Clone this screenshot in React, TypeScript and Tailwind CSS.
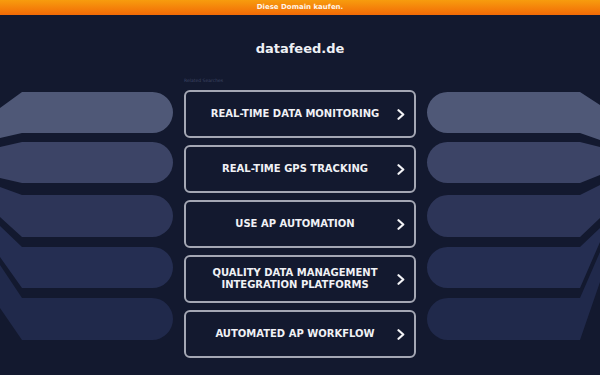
import React from "react";

type Row = { t: number; b: number; tl: number; bl: number; c: string };

const leftRows: Row[] = [
  { t: 2, b: 43, tl: 18, bl: 48, c: "#4f5877" },
  { t: 52, b: 93, tl: 57, bl: 88, c: "#3c4466" },
  { t: 105, b: 147, tl: 97, bl: 127, c: "#2d3558" },
  { t: 157, b: 198, tl: 136, bl: 167, c: "#252e52" },
  { t: 208, b: 250, tl: 175, bl: 218, c: "#20294b" },
];

const rightRows: Row[] = [
  { t: 2, b: 43, tl: 15, bl: 50, c: "#4f5877" },
  { t: 52, b: 93, tl: 57, bl: 85, c: "#3c4466" },
  { t: 105, b: 147, tl: 95, bl: 128, c: "#2d3558" },
  { t: 157, b: 198, tl: 138, bl: 152, c: "#252e52" },
  { t: 208, b: 250, tl: 162, bl: 192, c: "#20294b" },
];

function LeftDeco() {
  return (
    <svg width="184" height="270" viewBox="0 0 184 270" className="shrink-0">
      {leftRows.map((r, i) => {
        const rad = (r.b - r.t) / 2;
        return (
          <path
            key={i}
            d={`M22,${r.t} L${173 - rad},${r.t} A${rad},${rad} 0 0 1 ${173 - rad},${r.b} L22,${r.b} L0,${r.bl} L0,${r.tl} Z`}
            fill={r.c}
          />
        );
      })}
    </svg>
  );
}

function RightDeco() {
  return (
    <svg width="184" height="270" viewBox="0 0 184 270" className="shrink-0">
      {rightRows.map((r, i) => {
        const rad = (r.b - r.t) / 2;
        return (
          <path
            key={i}
            d={`M164,${r.t} L${11 + rad},${r.t} A${rad},${rad} 0 0 0 ${11 + rad},${r.b} L164,${r.b} L184,${r.bl} L184,${r.tl} Z`}
            fill={r.c}
          />
        );
      })}
    </svg>
  );
}

const items: string[][] = [
  ["REAL-TIME DATA MONITORING"],
  ["REAL-TIME GPS TRACKING"],
  ["USE AP AUTOMATION"],
  ["QUALITY DATA MANAGEMENT", "INTEGRATION PLATFORMS"],
  ["AUTOMATED AP WORKFLOW"],
];

function Chevron() {
  return (
    <svg width="8" height="11" viewBox="0 0 8 11" className="shrink-0">
      <polyline
        points="1.5,1.2 6.3,5.5 1.5,9.8"
        fill="none"
        stroke="#f2f2f5"
        strokeWidth="2.2"
        strokeLinecap="round"
        strokeLinejoin="round"
      />
    </svg>
  );
}

export default function App() {
  return (
    <div className="w-[600px] h-[375px] overflow-hidden bg-[#13192f] font-['DejaVu_Sans',sans-serif]">
      <div className="h-[15px] bg-gradient-to-b from-[#f79c0e] to-[#f16906] flex items-center justify-center">
        <span className="text-[7px] leading-none font-bold text-[#fff4e6]">Diese Domain kaufen.</span>
      </div>
      <div className="flex justify-center pt-[26px]">
        <h1 className="text-[13px] leading-[16px] font-bold text-[#eef0f5]">datafeed.de</h1>
      </div>
      <div className="flex justify-center pt-[21px]">
        <div className="w-[232px] text-[4.5px] leading-[6px] text-[#3f4665]">Related Searches</div>
      </div>
      <div className="flex mt-[6px]">
        <LeftDeco />
        <div className="w-[232px] shrink-0 flex flex-col gap-[7px]">
          {items.map((lines, i) => (
            <div
              key={i}
              className="h-[48px] rounded-[6px] border-2 border-[#a4a7b4] bg-[#13192f] flex items-center pl-[14px] pr-[9px]"
            >
              <div className="flex-1 text-center text-[10px] leading-[12px] font-bold text-[#f0f1f5] mr-[7px]">
                {lines.map((l, j) => (
                  <div key={j}>{l}</div>
                ))}
              </div>
              <Chevron />
            </div>
          ))}
        </div>
        <RightDeco />
      </div>
    </div>
  );
}
